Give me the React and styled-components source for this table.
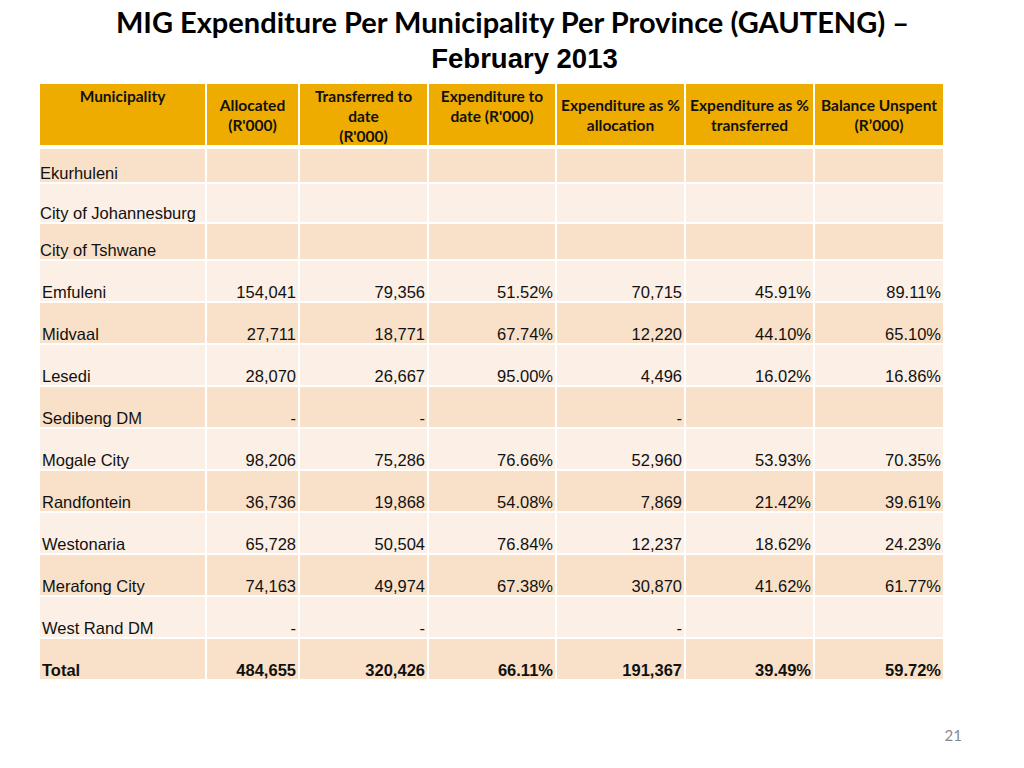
import React from 'react';
import styled, { createGlobalStyle } from 'styled-components';

const GlobalStyle = createGlobalStyle`
  html, body { margin: 0; padding: 0; background: #ffffff; }
  body { font-family: "Liberation Sans", Arial, sans-serif; }
`;

const columns = [
  { label: ['Municipality'], valign: 'start' },
  { label: ['Allocated', "(R'000)"], valign: 'center' },
  { label: ['Transferred to', 'date', "(R'000)"], valign: 'start' },
  { label: ['Expenditure to', "date (R'000)"], valign: 'start' },
  { label: ['Expenditure as %', 'allocation'], valign: 'center' },
  { label: ['Expenditure as %', 'transferred'], valign: 'center' },
  { label: ['Balance Unspent', '(R\u2019000)'], valign: 'center' },
];

const rows = [
  { name: 'Ekurhuleni', h: 35, values: ['', '', '', '', '', ''] },
  { name: 'City of Johannesburg', h: 38, values: ['', '', '', '', '', ''] },
  { name: 'City of Tshwane', h: 35, values: ['', '', '', '', '', ''] },
  { name: 'Emfuleni', values: ['154,041', '79,356', '51.52%', '70,715', '45.91%', '89.11%'] },
  { name: 'Midvaal', values: ['27,711', '18,771', '67.74%', '12,220', '44.10%', '65.10%'] },
  { name: 'Lesedi', values: ['28,070', '26,667', '95.00%', '4,496', '16.02%', '16.86%'] },
  { name: 'Sedibeng DM', values: ['-', '-', '', '-', '', ''] },
  { name: 'Mogale City', values: ['98,206', '75,286', '76.66%', '52,960', '53.93%', '70.35%'] },
  { name: 'Randfontein', values: ['36,736', '19,868', '54.08%', '7,869', '21.42%', '39.61%'] },
  { name: 'Westonaria', values: ['65,728', '50,504', '76.84%', '12,237', '18.62%', '24.23%'] },
  { name: 'Merafong City', values: ['74,163', '49,974', '67.38%', '30,870', '41.62%', '61.77%'] },
  { name: 'West Rand DM', values: ['-', '-', '', '-', '', ''] },
  { name: 'Total', bold: true, values: ['484,655', '320,426', '66.11%', '191,367', '39.49%', '59.72%'] },
];

export default function App() {
  const rowHeights = ['61px', ...rows.map((r) => `${r.h || 40}px`)].join(' ');
  return (
    <>
      <GlobalStyle />
      <Slide>
        <Title>
          <TitleLine>MIG Expenditure Per Municipality Per Province (GAUTENG) –</TitleLine>
          <SubLine>February 2013</SubLine>
        </Title>
        <Table style={{ gridTemplateRows: rowHeights }}>
          {columns.map((c, i) => (
            <HeadCell key={'h' + i} $valign={c.valign}>
              {c.label.map((l, j) => (
                <span key={j}>{l}</span>
              ))}
            </HeadCell>
          ))}
          {rows.map((r, i) => (
            <React.Fragment key={r.name}>
              <Cell $shade={i % 2 === 0} $bold={r.bold} $first={i < 3}>
                {r.name}
              </Cell>
              {r.values.map((v, j) => (
                <Cell key={j} $shade={i % 2 === 0} $bold={r.bold} $num>
                  {v}
                </Cell>
              ))}
            </React.Fragment>
          ))}
        </Table>
        <Footer>
          <PageNum>21</PageNum>
        </Footer>
      </Slide>
    </>
  );
}

const Slide = styled.div`
  width: 1024px;
  height: 768px;
  display: flex;
  flex-direction: column;
  box-sizing: border-box;
  padding: 4px 0 0 40px;
  overflow: hidden;
`;

const Title = styled.div`
  display: flex;
  flex-direction: column;
  align-items: center;
  width: 945px;
  margin-left: -40px;
  padding-left: 40px;
  color: #000;
`;

const TitleLine = styled.div`
  font-family: Lato, "Open Sans", sans-serif;
  font-weight: 700;
  font-size: 29px;
  line-height: 36px;
  white-space: nowrap;
`;

const SubLine = styled.div`
  font-family: "Liberation Sans", Arial, sans-serif;
  font-weight: 700;
  font-size: 27.5px;
  line-height: 38px;
  padding-left: 24px;
`;

const Table = styled.div`
  display: grid;
  grid-template-columns: 165px 91px 127px 126px 127px 127px 128px;
  column-gap: 2px;
  row-gap: 2px;
  margin-top: 6px;
  width: 903px;
  & > :nth-child(7) ~ :nth-child(-n + 14) {
    margin-top: 2px;
  }
`;

const HeadCell = styled.div`
  background: #eeac00;
  display: flex;
  flex-direction: column;
  align-items: center;
  justify-content: ${(p) => (p.$valign === 'center' ? 'center' : 'flex-start')};
  padding-top: ${(p) => (p.$valign === 'center' ? '0' : '2px')};
  box-sizing: border-box;
  font-family: Lato, "Open Sans", sans-serif;
  font-weight: 700;
  font-size: 15.5px;
  line-height: 20px;
  color: #111;
  text-align: center;
  white-space: nowrap;
`;

const Cell = styled.div`
  background: ${(p) => (p.$shade ? '#f9e1c9' : '#fbefe6')};
  display: flex;
  align-items: flex-end;
  justify-content: ${(p) => (p.$num ? 'flex-end' : 'flex-start')};
  padding: 0 ${(p) => (p.$num ? '2px' : '0')} 0 ${(p) => (p.$first ? '0' : '2px')};
  box-sizing: border-box;
  font-family: "Liberation Sans", Arial, sans-serif;
  font-size: 16.5px;
  font-weight: ${(p) => (p.$bold ? 700 : 400)};
  line-height: 18px;
  color: #111;
  white-space: nowrap;
`;

const Footer = styled.div`
  margin-top: auto;
  display: flex;
  justify-content: flex-end;
  padding: 0 62px 24px 0;
`;

const PageNum = styled.span`
  font-family: Lato, "Open Sans", sans-serif;
  font-size: 15px;
  color: #8a8a8a;
`;
